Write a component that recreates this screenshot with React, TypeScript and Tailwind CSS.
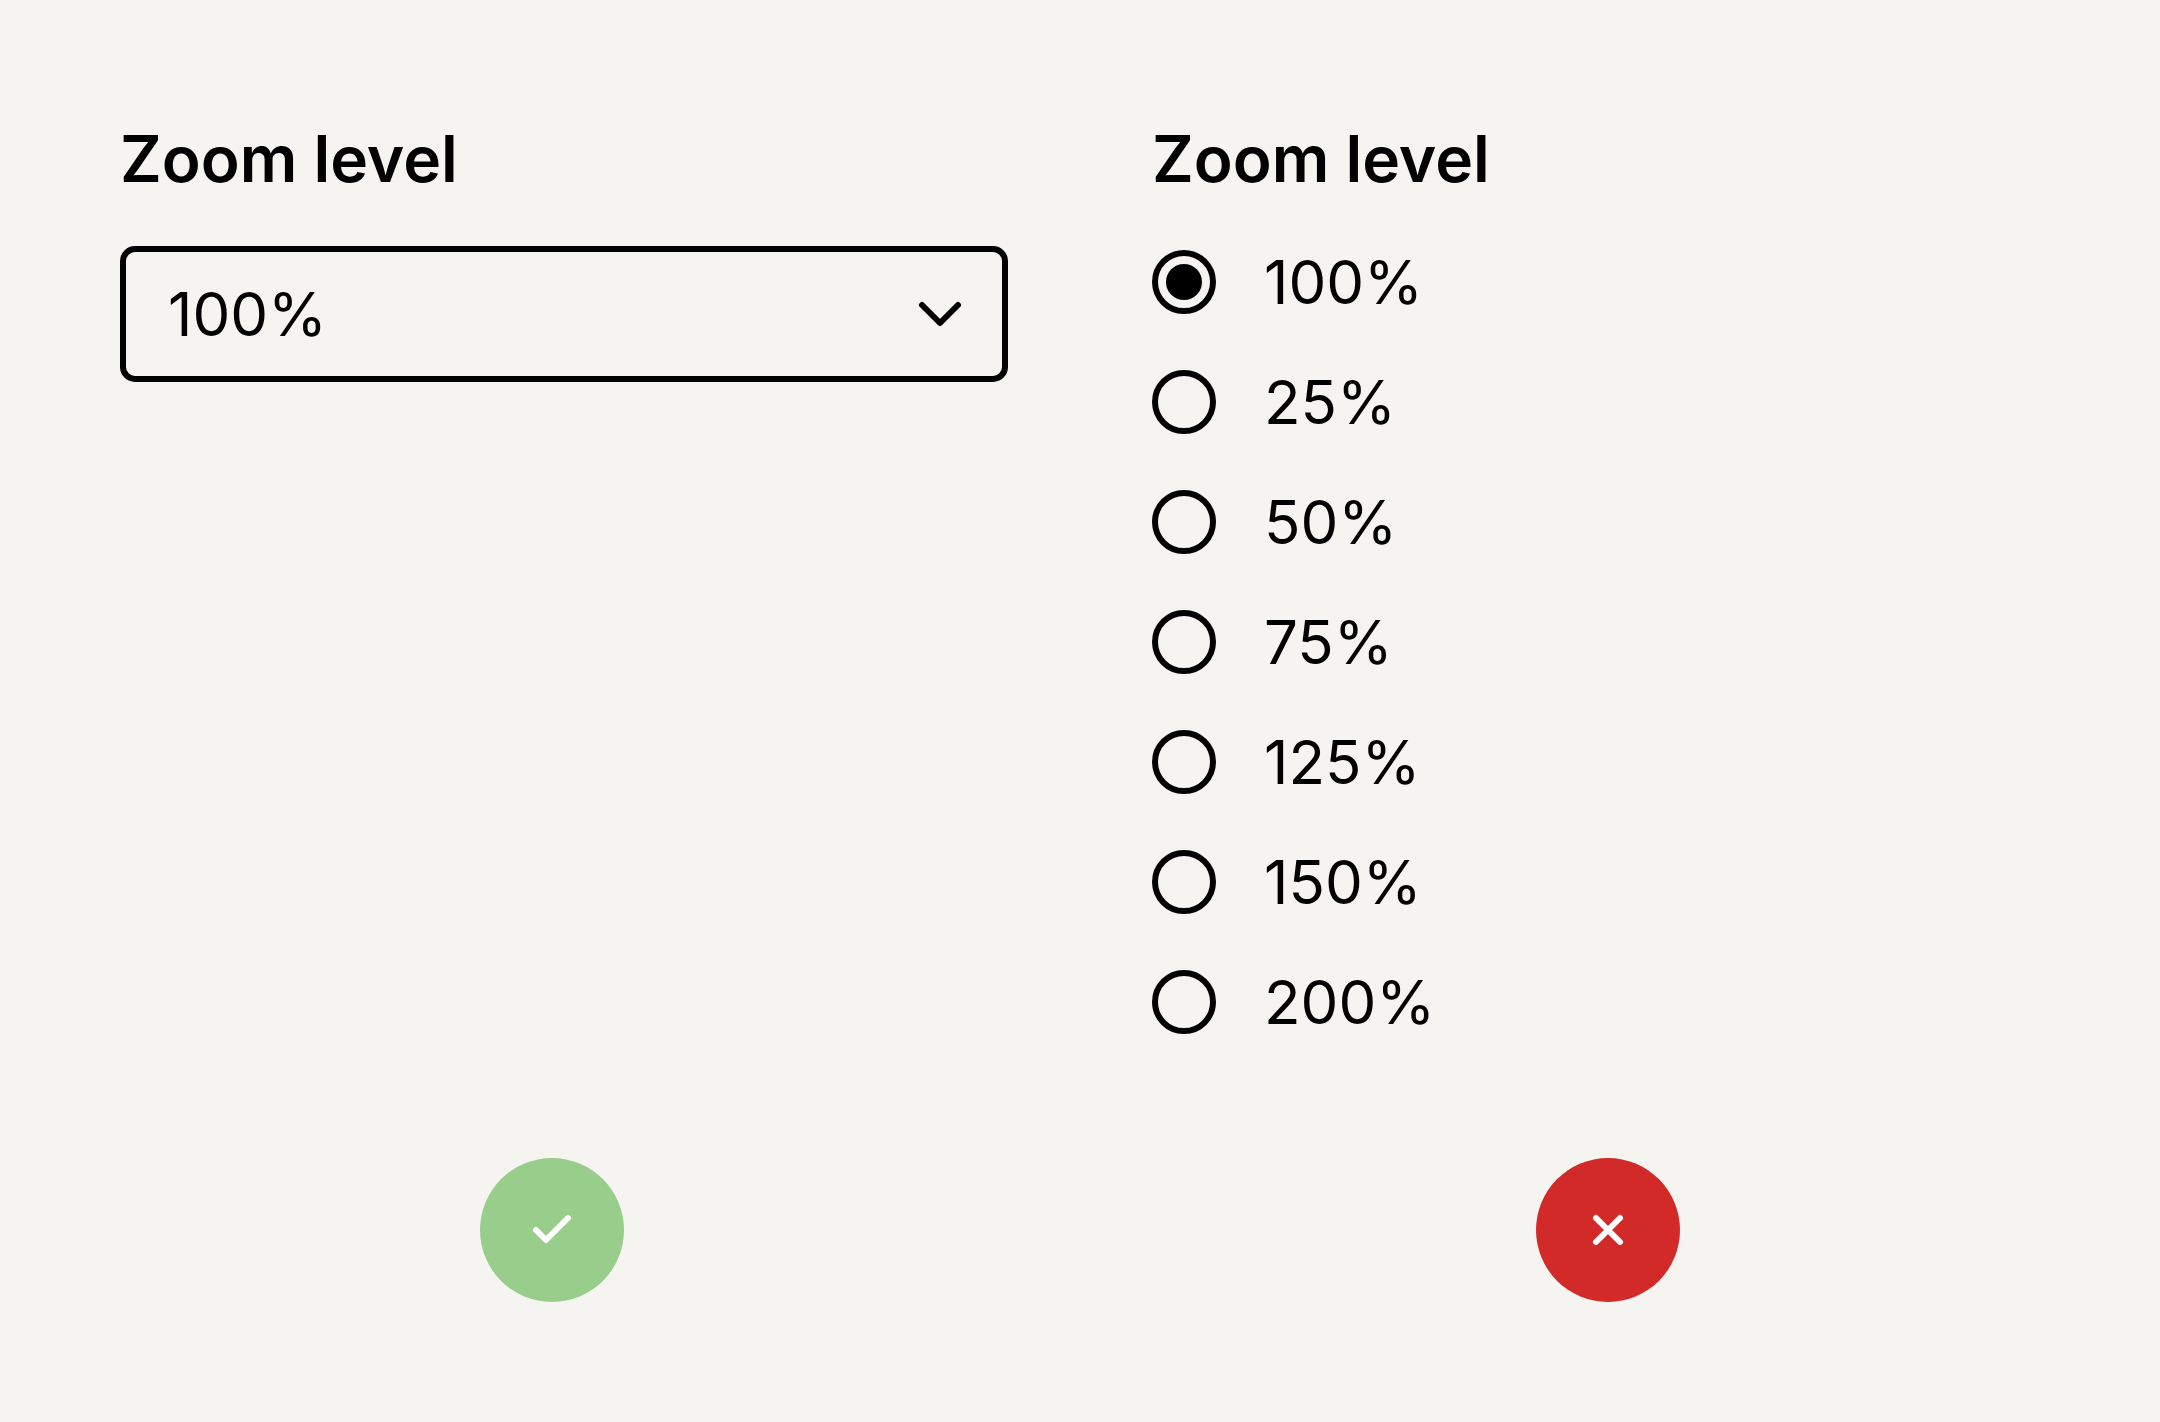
import React, { useState } from 'react';

const ZOOM_LEVELS = ['100%', '25%', '50%', '75%', '125%', '150%', '200%'];

interface ZoomControlProps {
  value: string;
  onChange: (value: string) => void;
}

const ZoomSelect: React.FC<ZoomControlProps> = ({ value, onChange }) => {
  return (
    <div className="pl-6">
      <label htmlFor="zoom-select" className="block text-[64px] leading-[78px] font-semibold">
        Zoom level
      </label>
      <div className="mt-12 grid items-center">
        <select
          id="zoom-select"
          value={value}
          onChange={(e) => onChange(e.target.value)}
          className="col-start-1 row-start-1 h-[136px] w-full appearance-none rounded-[15px] border-6 border-black bg-transparent pr-28 pl-[42px] text-[60px] leading-[72px]"
        >
          {ZOOM_LEVELS.map((level) => (
            <option key={level} value={level}>
              {level}
            </option>
          ))}
        </select>
        <svg
          viewBox="0 0 48 48"
          className="pointer-events-none col-start-1 row-start-1 mr-11 size-12 justify-self-end"
          fill="none"
          stroke="currentColor"
          strokeWidth="6"
          strokeLinecap="round"
          strokeLinejoin="round"
          aria-hidden="true"
        >
          <path d="M6 15l18 18 18-18" />
        </svg>
      </div>
    </div>
  );
};

const ZoomRadios: React.FC<ZoomControlProps> = ({ value, onChange }) => {
  return (
    <fieldset>
      <legend className="text-[64px] leading-[78px] font-semibold">Zoom level</legend>
      <div className="mt-12 flex flex-col items-start gap-12">
        {ZOOM_LEVELS.map((level) => (
          <label key={level} className="flex items-center gap-12 text-[60px] leading-[72px]">
            <input
              type="radio"
              name="zoom-level"
              value={level}
              checked={value === level}
              onChange={() => onChange(level)}
              className="grid size-16 shrink-0 appearance-none place-content-center rounded-full border-6 border-black checked:before:size-9 checked:before:rounded-full checked:before:bg-black checked:before:content-['']"
            />
            {level}
          </label>
        ))}
      </div>
    </fieldset>
  );
};

interface VerdictProps {
  good: boolean;
}

const Verdict: React.FC<VerdictProps> = ({ good }) => {
  return (
    <div
      role="img"
      aria-label={good ? 'Do' : "Don't"}
      className={`flex size-36 items-center justify-center justify-self-center rounded-full text-white ${
        good ? 'bg-[#99cd8b]' : 'bg-[#d22a28]'
      }`}
    >
      <svg
        viewBox="0 0 48 48"
        className="size-12"
        fill="none"
        stroke="currentColor"
        strokeWidth="6"
        strokeLinecap="round"
        strokeLinejoin="round"
        aria-hidden="true"
      >
        {good ? <path d="M8 24l10 10 22-22" /> : <path d="M12 12l24 24M36 12L12 36" />}
      </svg>
    </div>
  );
};

const App: React.FC = () => {
  const [selected, setSelected] = useState<string>('100%');
  const [checked, setChecked] = useState<string>('100%');

  return (
    <main className="grid min-h-screen grid-cols-2 content-start gap-x-36 gap-y-30 bg-[#f5f4f0] px-24 py-30 font-['Inter',sans-serif] text-black">
      <ZoomSelect value={selected} onChange={setSelected} />
      <ZoomRadios value={checked} onChange={setChecked} />
      <Verdict good />
      <Verdict good={false} />
    </main>
  );
};

export default App;
